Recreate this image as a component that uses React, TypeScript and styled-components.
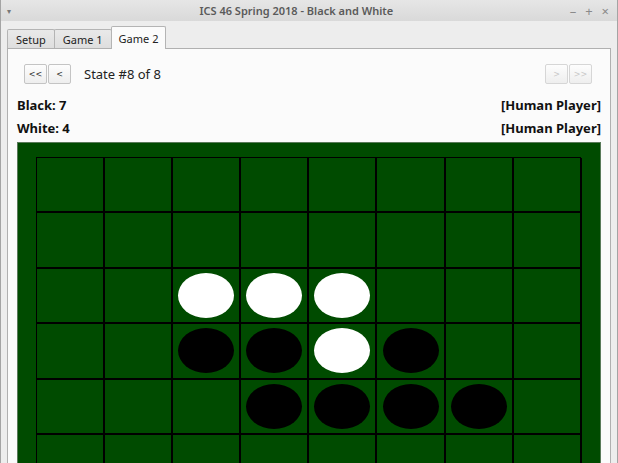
import React from "react";
import styled, { createGlobalStyle, css } from "styled-components";

const GlobalStyle = createGlobalStyle`
  html, body {
    margin: 0;
    padding: 0;
    overflow: hidden;
  }
  body {
    font-family: "Noto Sans", "Open Sans", "DejaVu Sans", sans-serif;
  }
`;

// 0 = empty, 1 = black, 2 = white
const board: number[][] = [
  [0, 0, 0, 0, 0, 0, 0, 0],
  [0, 0, 0, 0, 0, 0, 0, 0],
  [0, 0, 2, 2, 2, 0, 0, 0],
  [0, 0, 1, 1, 2, 1, 0, 0],
  [0, 0, 0, 1, 1, 1, 1, 0],
  [0, 0, 0, 0, 0, 0, 0, 0],
  [0, 0, 0, 0, 0, 0, 0, 0],
  [0, 0, 0, 0, 0, 0, 0, 0],
];

const Window = styled.div`
  width: 618px;
  height: 463px;
  box-sizing: border-box;
  border-left: 1px solid #a4a4a4;
  border-right: 1px solid #a4a4a4;
  background: #ededed;
  display: flex;
  flex-direction: column;
  overflow: hidden;
`;

const TitleBar = styled.div`
  height: 21px;
  flex-shrink: 0;
  background: linear-gradient(#e6e6e6, #d9d9d9);
  display: flex;
  align-items: center;
  padding: 0 8px 0 6px;
  color: #5a5a5a;
  font-size: 11px;
  font-weight: 600;
`;

const TitleText = styled.div`
  flex: 1;
  text-align: center;
  padding-left: 4px;
`;

const MenuGlyph = styled.span`
  font-size: 8px;
  color: #777;
  width: 12px;
`;

const Controls = styled.div`
  display: flex;
  gap: 9px;
  font-size: 13px;
  font-weight: 400;
  color: #8a8a8a;
`;

const Body = styled.div`
  flex: 1;
  padding: 5px 6px 0 6px;
  display: flex;
  flex-direction: column;
  min-height: 0;
`;

const TabRow = styled.div`
  display: flex;
  align-items: flex-end;
  height: 22px;
  position: relative;
  z-index: 1;
`;

const Tab = styled.div<{ $active?: boolean }>`
  box-sizing: border-box;
  font-size: 11px;
  color: #222;
  border: 1px solid #b4b4b4;
  border-bottom: none;
  border-radius: 2px 2px 0 0;
  display: flex;
  align-items: center;
  justify-content: center;
  ${(p) =>
    p.$active
      ? css`
          height: 23px;
          margin-bottom: -1px;
          background: #fbfbfb;
          padding: 0 7px;
        `
      : css`
          height: 19px;
          background: linear-gradient(#e9e9e9, #dedede);
          padding: 0 8px;
          margin-right: -1px;
        `}
`;

const Pane = styled.div`
  flex: 1;
  border: 1px solid #b0b0b0;
  background: #fbfbfb;
  padding: 15px 9px 0 9px;
  display: flex;
  flex-direction: column;
`;

const Toolbar = styled.div`
  display: flex;
  align-items: center;
  padding: 0 8px 0 7px;
  height: 20px;
`;

const NavButton = styled.button<{ $disabled?: boolean }>`
  width: 23px;
  height: 20px;
  box-sizing: border-box;
  border: 1px solid #c4c4c4;
  border-radius: 2px;
  background: linear-gradient(#fdfdfd, #eeeeee);
  font-family: "DejaVu Sans", sans-serif;
  font-size: 8px;
  padding: 0;
  margin-right: 1px;
  color: ${(p) => (p.$disabled ? "#c8c8c8" : "#333")};
  border-color: ${(p) => (p.$disabled ? "#d6d6d6" : "#c4c4c4")};
`;

const StateText = styled.span`
  font-size: 13px;
  color: #222;
  margin-left: 12px;
  flex: 1;
`;

const PlayerRow = styled.div<{ $top: number }>`
  display: flex;
  justify-content: space-between;
  font-size: 13px;
  font-weight: 700;
  color: #111;
  margin-top: ${(p) => p.$top}px;
  height: 18px;
  line-height: 18px;
`;

const BoardFrame = styled.div`
  margin-top: 5px;
  box-sizing: border-box;
  border: 1px solid #5a7a5a;
  background: #004b00;
  padding: 14px 19px 15px 18px;
`;

const Grid = styled.div`
  display: grid;
  grid-template-columns: repeat(8, 68.1px);
  grid-template-rows: repeat(8, 55.4px);
  border-top: 1px solid #000;
  border-left: 1px solid #000;
`;

const Cell = styled.div`
  box-sizing: border-box;
  border-right: 2px solid #000;
  border-bottom: 2px solid #000;
  display: flex;
  align-items: center;
  justify-content: center;
`;

const Disc = styled.div<{ $white: boolean }>`
  width: 56px;
  height: 45px;
  border-radius: 50%;
  background: ${(p) => (p.$white ? "#ffffff" : "#000000")};
`;

export default function App() {
  return (
    <>
      <GlobalStyle />
      <Window>
        <TitleBar>
          <MenuGlyph>▾</MenuGlyph>
          <TitleText>ICS 46 Spring 2018 - Black and White</TitleText>
          <Controls>
            <span>–</span>
            <span>+</span>
            <span>×</span>
          </Controls>
        </TitleBar>
        <Body>
          <TabRow>
            <Tab>Setup</Tab>
            <Tab>Game 1</Tab>
            <Tab $active>Game 2</Tab>
          </TabRow>
          <Pane>
            <Toolbar>
              <NavButton>&lt;&lt;</NavButton>
              <NavButton>&lt;</NavButton>
              <StateText>State #8 of 8</StateText>
              <NavButton $disabled>&gt;</NavButton>
              <NavButton $disabled>&gt;&gt;</NavButton>
            </Toolbar>
            <PlayerRow $top={12}>
              <span>Black: 7</span>
              <span>[Human Player]</span>
            </PlayerRow>
            <PlayerRow $top={5}>
              <span>White: 4</span>
              <span>[Human Player]</span>
            </PlayerRow>
            <BoardFrame>
              <Grid>
                {board.flatMap((row, r) =>
                  row.map((v, c) => (
                    <Cell key={`${r}-${c}`}>
                      {v !== 0 && <Disc $white={v === 2} />}
                    </Cell>
                  ))
                )}
              </Grid>
            </BoardFrame>
          </Pane>
        </Body>
      </Window>
    </>
  );
}
